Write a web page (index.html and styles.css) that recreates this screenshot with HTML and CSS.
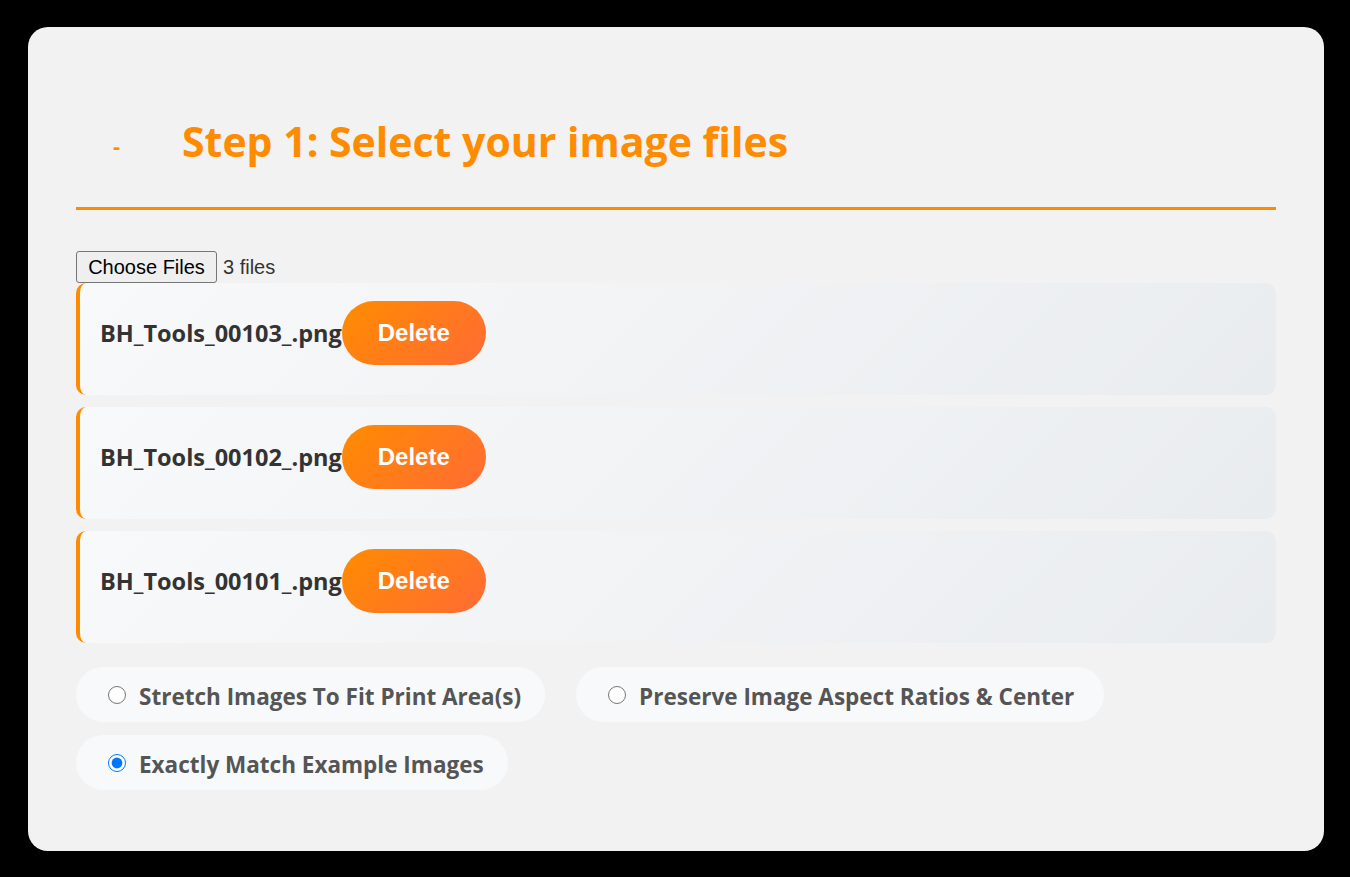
FILE: index.html
```html
<!DOCTYPE html>
<html>
<head>
<meta charset="utf-8">
<link rel="stylesheet" href="styles.css">
</head>
<body>
<div class="card">
  <div class="header">
    <span class="icon">-</span>
    <h2 class="title">Step 1: Select your image files</h2>
  </div>
  <div class="picker">
    <input type="file" class="file-input" multiple>
    <span class="file-count">3 files</span>
  </div>
  <div class="file-list">
    <div class="file-row"><span class="file-name">BH_Tools_00103_.png</span><button class="delete">Delete</button></div>
    <div class="file-row"><span class="file-name">BH_Tools_00102_.png</span><button class="delete">Delete</button></div>
    <div class="file-row"><span class="file-name">BH_Tools_00101_.png</span><button class="delete">Delete</button></div>
  </div>
  <div class="options">
    <label class="option"><input type="radio" name="mode" class="radio"><span class="option-text">Stretch Images To Fit Print Area(s)</span></label>
    <label class="option option-wide"><input type="radio" name="mode" class="radio"><span class="option-text">Preserve Image Aspect Ratios &amp; Center</span></label>
    <label class="option"><input type="radio" name="mode" class="radio" checked><span class="option-text">Exactly Match Example Images</span></label>
  </div>
</div>
</body>
</html>
```

FILE: styles.css
```css
html, body {
  margin: 0;
  background: #000;
}
body {
  padding: 27px 26px 26px 28px;
  font-family: "Open Sans", "Noto Sans", sans-serif;
}
.card {
  background: #f2f2f2;
  border-radius: 20px;
  padding: 48px 48px 61px 48px;
  box-sizing: border-box;
  height: 824px;
}
.header {
  display: flex;
  align-items: center;
  height: 132px;
  border-bottom: 3px solid #ff8c00;
}
.icon {
  color: #ff8c00;
  font-weight: 700;
  font-size: 22px;
  width: 106px;
  padding-left: 37px;
  box-sizing: border-box;
  padding-top: 8px;
}
.title {
  margin: 0;
  color: #ff8c00;
  font-size: 41px;
  font-weight: 700;
}
.picker {
  margin-top: 41px;
  display: flex;
  align-items: center;
  font-family: "Liberation Sans", Arial, sans-serif;
  font-size: 20px;
  color: #333;
  height: 32px;
}
.file-input {
  font-family: "Liberation Sans", Arial, sans-serif;
  font-size: 20px;
  width: 141px;
  color: transparent;
  overflow: hidden;
}
.file-input::file-selector-button {
  font-family: "Liberation Sans", Arial, sans-serif;
  font-size: 20px;
  color: #000;
  height: 32px;
  width: 141px;
  padding: 0 11px;
  margin: 0;
  border: 1px solid #767676;
  border-radius: 3px;
  background: #efefef;
}
.file-count {
  margin-left: 6px;
}
.file-list {
  display: flex;
  flex-direction: column;
  gap: 12px;
}
.file-row {
  display: flex;
  align-items: flex-start;
  height: 112px;
  box-sizing: border-box;
  padding: 18px 20px;
  border-left: 4px solid #ff8c00;
  border-radius: 10px;
  background: linear-gradient(135deg, #f8f9fa, #e9ecef);
}
.file-name {
  font-weight: 700;
  font-size: 23.5px;
  color: #333;
  line-height: 64px;
}
.delete {
  height: 64px;
  width: 144px;
  border: none;
  border-radius: 32px;
  background: linear-gradient(135deg, #ff8c00, #ff6b35);
  color: #fff;
  font-family: "Liberation Sans", Arial, sans-serif;
  font-weight: 700;
  font-size: 24px;
  padding: 0;
}
.options {
  margin-top: 24px;
  display: flex;
  flex-wrap: wrap;
  column-gap: 31px;
  row-gap: 13px;
}
.option {
  display: flex;
  align-items: center;
  height: 55px;
  padding: 0 24px 0 32px;
  background: #f8f9fa;
  border-radius: 28px;
  font-weight: 700;
  font-size: 22.5px;
  color: #555;
}
.option-wide {
  padding-right: 30px;
}
.option-text {
  padding-top: 3px;
}
.radio {
  width: 18px;
  height: 18px;
  margin: 0 13px 0 0;
}
```
